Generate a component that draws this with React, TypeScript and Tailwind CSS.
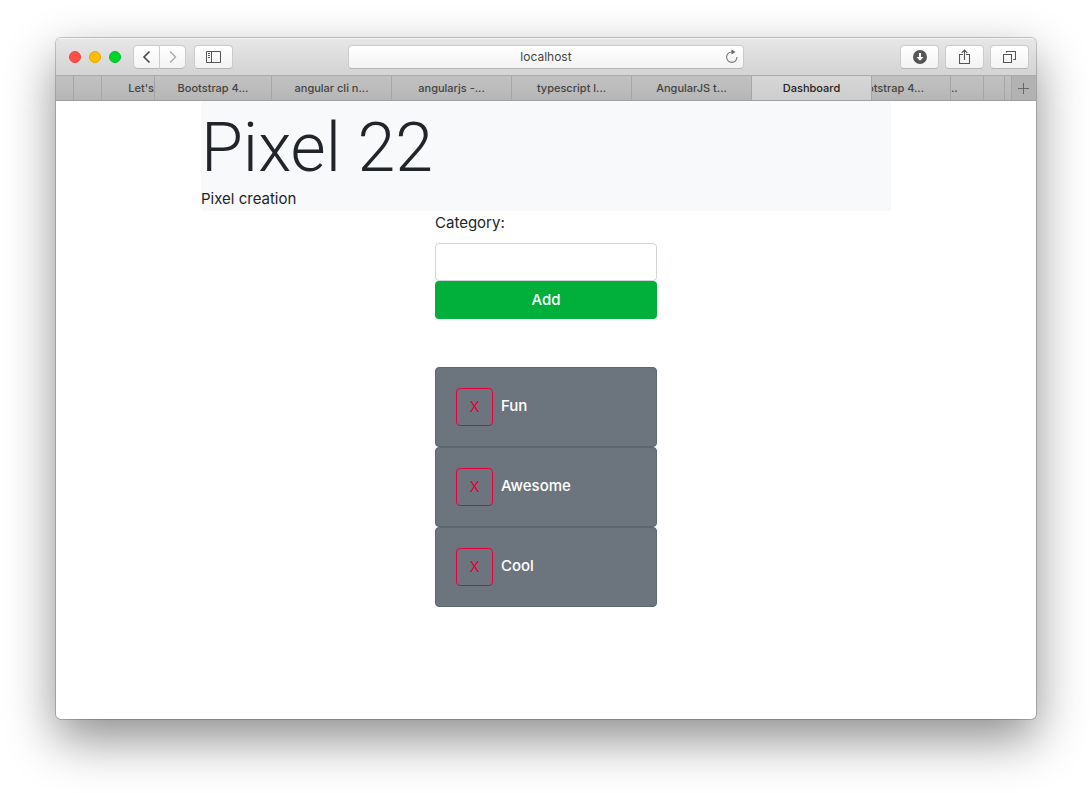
import { useState, type FormEvent, type ReactNode } from "react";

type Tab = { title: string; className: string; titleClassName?: string; active?: boolean };

const tabs: Tab[] = [
  { title: "", className: "grow-17" },
  { title: "", className: "grow-27" },
  { title: "Let's", className: "grow-52 justify-end" },
  { title: "Bootstrap 4...", className: "grow-116 justify-center" },
  { title: "angular cli n...", className: "grow-119 justify-center" },
  { title: "angularjs -...", className: "grow-119 justify-center" },
  { title: "typescript l...", className: "grow-119 justify-center" },
  { title: "AngularJS t...", className: "grow-119 justify-center" },
  { title: "Dashboard", className: "grow-119 justify-center", active: true },
  { title: "otstrap 4...", className: "grow-78 justify-end", titleClassName: "mr-[26px]" },
  { title: "..", className: "grow-32" },
  { title: "", className: "grow-20" },
  { title: "", className: "grow-6" },
];

function ToolButton({ label, className = "w-[39px] rounded", children }: { label: string; className?: string; children: ReactNode }) {
  return (
    <button
      type="button"
      aria-label={label}
      className={`flex h-6 items-center justify-center border border-[#cbcbcb] border-b-[#b5b5b5] bg-linear-to-b from-white to-[#f3f3f3] text-[#555] ${className}`}
    >
      {children}
    </button>
  );
}

function Toolbar() {
  return (
    <div className="grid h-[38px] grid-cols-[minmax(0,1fr)_396px_minmax(0,1fr)] items-center border-b border-[#acacac] bg-linear-to-b from-[#e7e7e7] to-[#d3d3d3] shadow-[inset_0_1px_0_#f5f5f5]">
      <div className="flex items-center pl-[13px]">
        <div className="mr-3 flex gap-2">
          <span className="size-3 rounded-full border border-[#e8463f] bg-[#ff4f47]" />
          <span className="size-3 rounded-full border border-[#e6a900] bg-[#ffbd00]" />
          <span className="size-3 rounded-full border border-[#00bd26] bg-[#00d52b]" />
        </div>
        <ToolButton label="Back" className="w-[27px] rounded-l-[5px] rounded-r-xs">
          <svg width="10" height="14" viewBox="0 0 10 14" fill="none" stroke="#444" strokeWidth="1.6">
            <path d="M7.500 1.500 2 7l5.500 5.500" />
          </svg>
        </ToolButton>
        <ToolButton label="Forward" className="mr-2 -ml-px w-[27px] rounded-l-xs rounded-r-[5px]">
          <svg width="10" height="14" viewBox="0 0 10 14" fill="none" stroke="#aaa" strokeWidth="1.4">
            <path d="M2 1.5 7.5 7 2 12.5" />
          </svg>
        </ToolButton>
        <ToolButton label="Show sidebar">
          <svg width="15" height="12" viewBox="0 0 15 12" fill="none" stroke="currentColor">
            <path d="M.5.500h14v11H.5zM5.500.500v11M2 2.500h2M2 4.500h2M2 6.500h2" />
          </svg>
        </ToolButton>
      </div>
      <div className="relative">
        <input
          aria-label="Address"
          defaultValue="localhost"
          className="block h-6 w-full rounded border border-[#cbcbcb] border-b-[#b5b5b5] bg-linear-to-b from-white to-[#f3f3f3] px-6 text-center text-xs text-[#444] outline-none"
        />
        <button type="button" aria-label="Reload" className="absolute top-1 right-1 flex size-4 items-center justify-center">
          <svg width="14" height="15" viewBox="0 0 14 15" fill="none" stroke="#777" strokeWidth="1.1">
            <path d="M7 3A5.200 5.200 0 1 0 12 8" />
            <path d="M6.500.5v5l4-2.500z" fill="#666" stroke="none" />
          </svg>
        </button>
      </div>
      <div className="flex justify-end gap-1.5 pr-[7px]">
        <ToolButton label="Downloads">
          <svg width="14" height="14" viewBox="0 0 14 14">
            <circle cx="7" cy="7" r="7" fill="#555" />
            <path d="M6 3h2v4h2.500L7 10.800 3.500 7H6z" fill="white" />
          </svg>
        </ToolButton>
        <ToolButton label="Share">
          <svg width="11" height="16" viewBox="0 0 11 16" fill="none" stroke="currentColor" strokeWidth="1.1">
            <path d="M4 5.500H.5v9h10v-9H7M5.500 11V1M2.700 3.800 5.500 1l2.800 2.800" />
          </svg>
        </ToolButton>
        <ToolButton label="Show all tabs">
          <svg width="13" height="13" viewBox="0 0 13 13" fill="none" stroke="currentColor" strokeWidth="1.1">
            <path d="M.5 4.500h8v8h-8zM3.500 2.800V1.500h9v8h-2.300" />
          </svg>
        </ToolButton>
      </div>
    </div>
  );
}

function TabBar() {
  return (
    <div className="flex h-[25px] border-b border-[#a0a0a0] bg-linear-to-b from-[#c1c1c1] to-[#b6b6b6]">
      {tabs.map((tab, i) => (
        <button
          key={i}
          type="button"
          aria-label={tab.title || "Tab"}
          className={`flex min-w-0 basis-0 items-center overflow-hidden border-r border-[#a6a6a6] text-[11px] font-medium whitespace-nowrap ${tab.className} ${
            tab.active ? "bg-linear-to-b from-[#d6d6d6] to-[#cecece] text-[#222]" : "text-[#444]"
          }`}
        >
          {tab.title && <span className={`shrink-0 ${tab.titleClassName ?? ""}`}>{tab.title}</span>}
        </button>
      ))}
      <button type="button" aria-label="New tab" className="flex min-w-0 grow-24 basis-0 items-center justify-center bg-[#b2b2b2]">
        <svg width="13" height="13" viewBox="0 0 13 13" stroke="#666">
          <path d="M5.500 1v11M0 6.500h11" />
        </svg>
      </button>
    </div>
  );
}

export default function App() {
  const [categories, setCategories] = useState(["Fun", "Awesome", "Cool"]);
  const [name, setName] = useState("");

  const add = (event: FormEvent) => {
    event.preventDefault();
    if (!name.trim()) return;
    setCategories([...categories, name.trim()]);
    setName("");
  };

  return (
    <div className="flex min-h-screen flex-col bg-white px-14 pt-[38px] pb-[74px] font-['Inter',sans-serif] text-[#212529]">
      <div className="flex grow flex-col overflow-hidden rounded-[5px] bg-white shadow-[0_0_0_1px_rgba(0,0,0,0.2),0_20px_50px_rgba(0,0,0,0.45)]">
        <Toolbar />
        <TabBar />
        <main className="mx-auto w-full max-w-[690px] text-[15px] leading-6">
          <header className="bg-[#f8f9fb]">
            <h1 className="pt-2 font-['Roboto',sans-serif] text-[68px] leading-[78px] font-light">Pixel 22</h1>
            <p>Pixel creation</p>
          </header>
          <div className="mx-auto w-[222px]">
            <form onSubmit={add} className="mb-12">
              <label htmlFor="category" className="mb-2 block">
                Category:
              </label>
              <input
                id="category"
                value={name}
                onChange={(e) => setName(e.target.value)}
                className="block h-[38px] w-full rounded border border-[#ced4da] bg-white px-3 outline-none"
              />
              <button type="submit" className="block h-[38px] w-full rounded bg-[#00b03b] font-medium text-white">
                Add
              </button>
            </form>
            <ul>
              {categories.map((category, i) => (
                <li key={i} className="flex h-20 items-center gap-2 rounded border border-[#5d676f] bg-[#6c757d] px-5 font-medium text-white">
                  <button
                    type="button"
                    aria-label={`Remove ${category}`}
                    onClick={() => setCategories(categories.filter((_, n) => n !== i))}
                    className="h-[38px] w-[37px] rounded border border-[#e9003a] font-normal text-[#e9003a]"
                  >
                    X
                  </button>
                  <span className="pb-0.5">{category}</span>
                </li>
              ))}
            </ul>
          </div>
        </main>
      </div>
    </div>
  );
}
